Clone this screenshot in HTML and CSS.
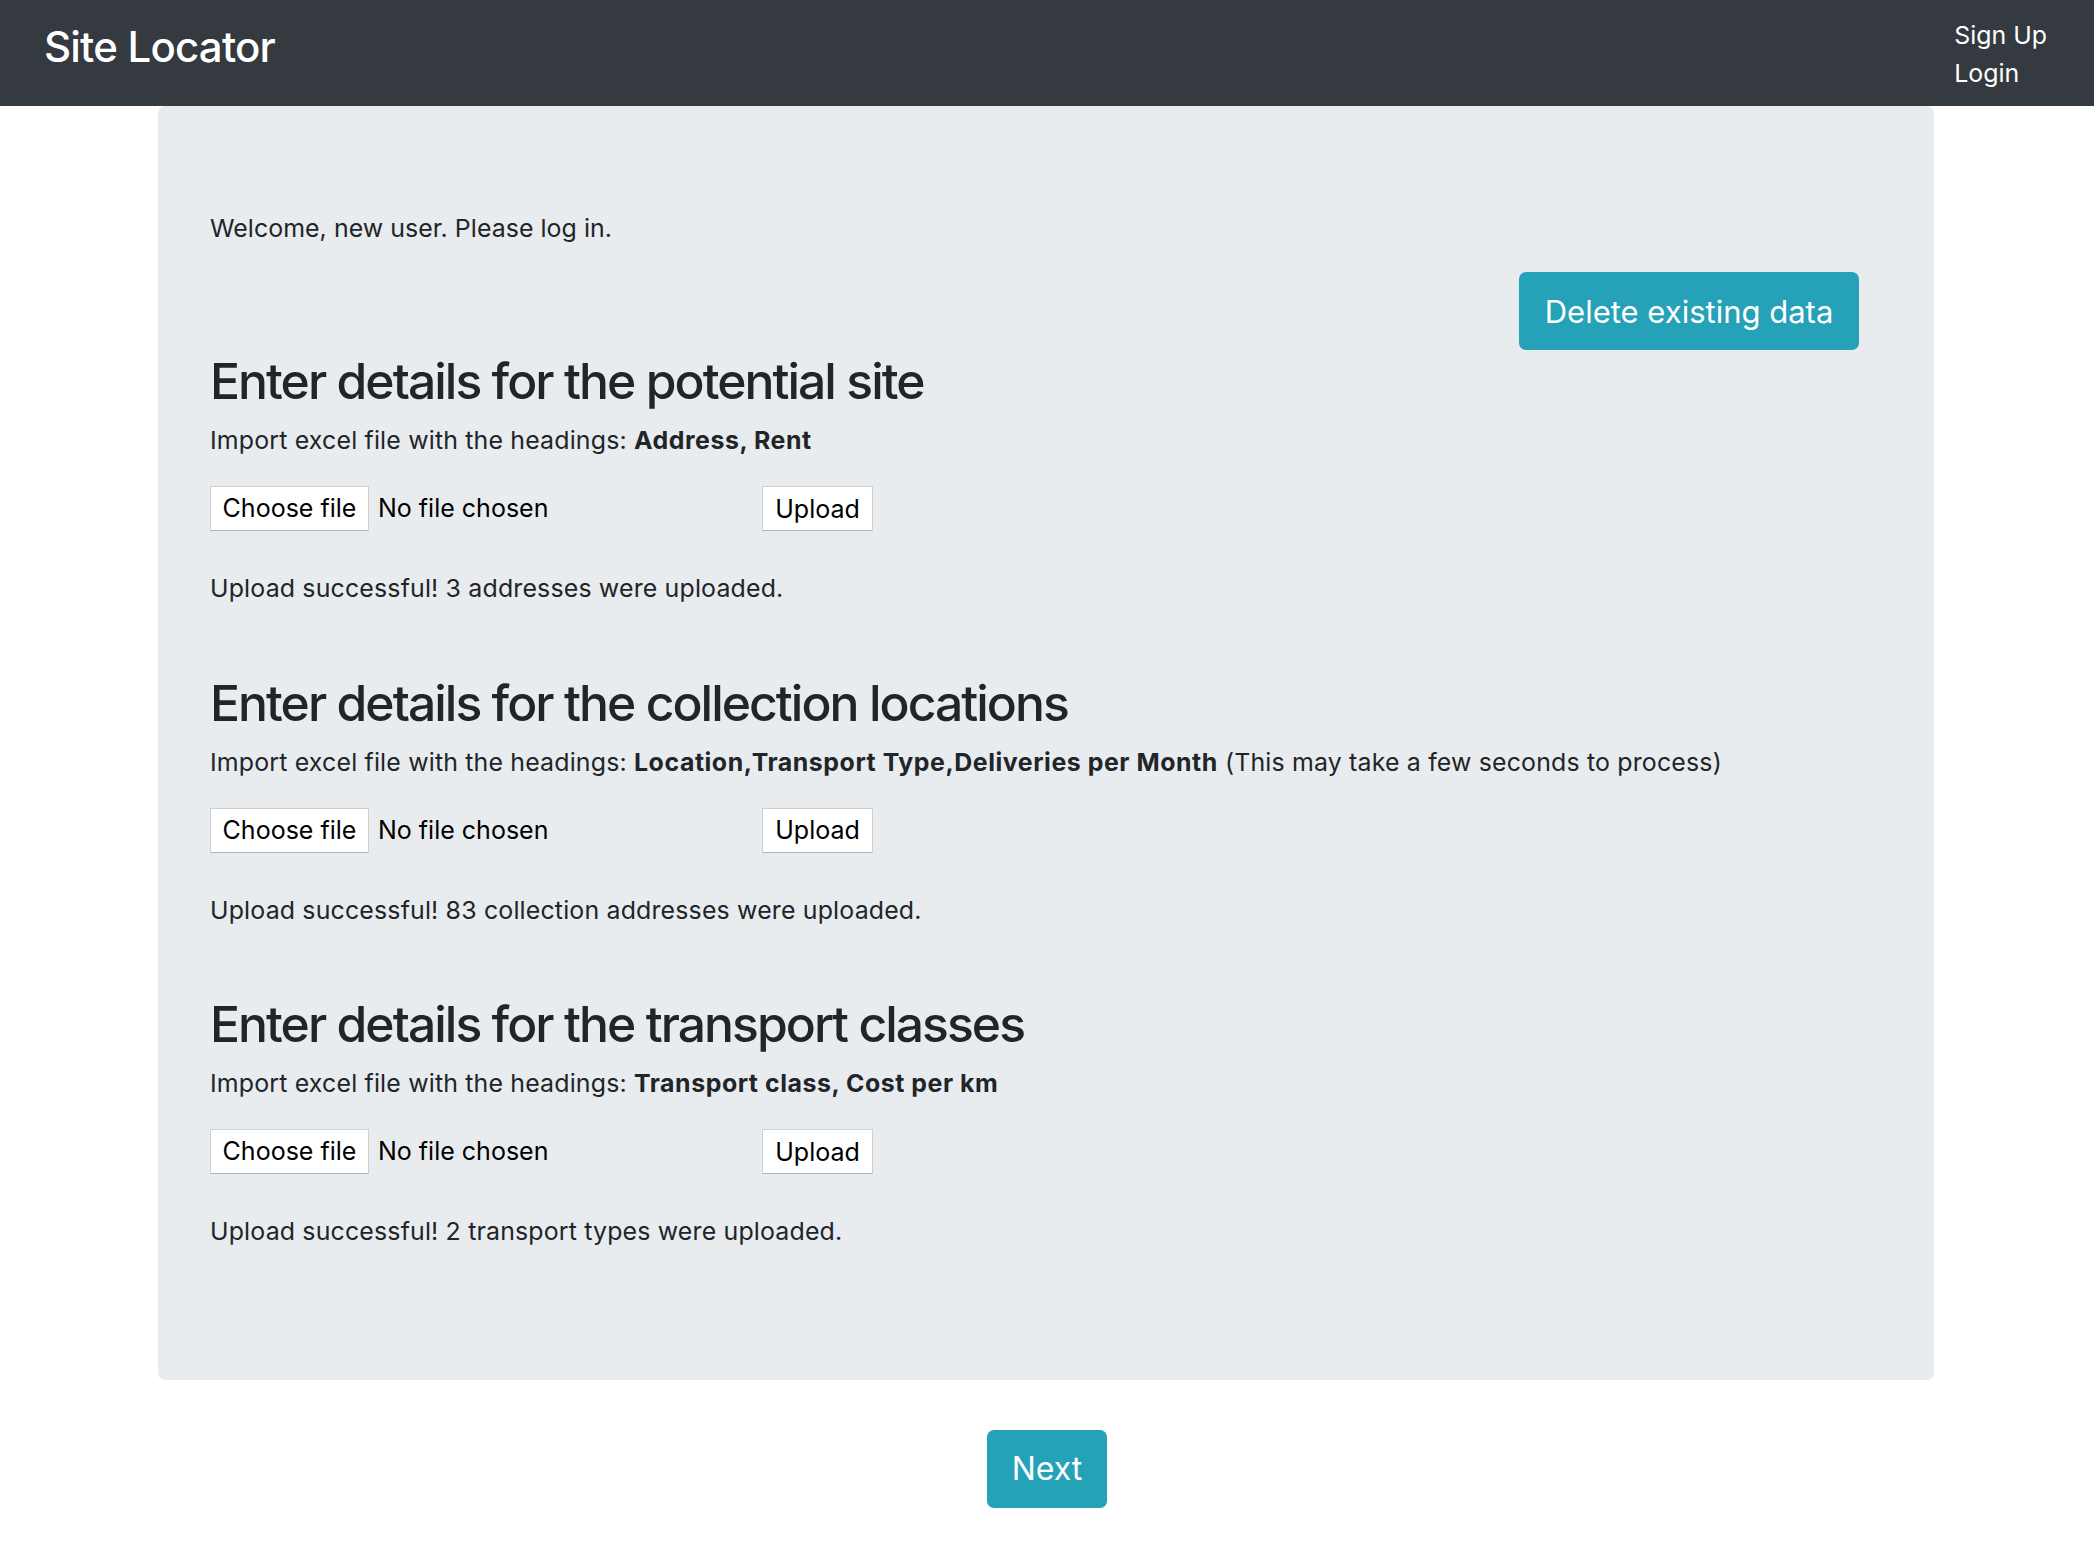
FILE: index.html
```html
<!DOCTYPE html>
<html lang="en">
<head>
<meta charset="utf-8">
<title>Site Locator</title>
<link rel="stylesheet" href="styles.css">
</head>
<body>
<header class="navbar">
  <a class="brand" href="#">Site Locator</a>
  <nav class="nav-links">
    <a href="#">Sign Up</a>
    <a href="#">Login</a>
  </nav>
</header>
<main class="jumbotron">
  <p class="welcome">Welcome, new user. Please log in.</p>
  <div class="delete-row">
    <button class="btn btn-info btn-delete">Delete existing data</button>
  </div>

  <section class="upload-section">
    <h2>Enter details for the potential site</h2>
    <p class="hint">Import excel file with the headings: <b>Address, Rent</b></p>
    <form class="upload-form">
      <div class="file-input"><span class="file-btn">Choose file</span><span class="file-name">No file chosen</span></div>
      <button type="button" class="upload-btn">Upload</button>
    </form>
    <p class="result">Upload successful! 3 addresses were uploaded.</p>
  </section>

  <section class="upload-section">
    <h2>Enter details for the collection locations</h2>
    <p class="hint">Import excel file with the headings: <b>Location,Transport Type,Deliveries per Month</b> (This may take a few seconds to process)</p>
    <form class="upload-form">
      <div class="file-input"><span class="file-btn">Choose file</span><span class="file-name">No file chosen</span></div>
      <button type="button" class="upload-btn">Upload</button>
    </form>
    <p class="result">Upload successful! 83 collection addresses were uploaded.</p>
  </section>

  <section class="upload-section">
    <h2>Enter details for the transport classes</h2>
    <p class="hint">Import excel file with the headings: <b>Transport class, Cost per km</b></p>
    <form class="upload-form">
      <div class="file-input"><span class="file-btn">Choose file</span><span class="file-name">No file chosen</span></div>
      <button type="button" class="upload-btn">Upload</button>
    </form>
    <p class="result">Upload successful! 2 transport types were uploaded.</p>
  </section>
</main>
<div class="next-row">
  <button class="btn btn-info btn-next">Next</button>
</div>
</body>
</html>
```

FILE: styles.css
```css
* { box-sizing: border-box; }

body {
  margin: 0;
  font-family: Inter, "Liberation Sans", sans-serif;
  font-size: 24.9px;
  line-height: 1.5;
  color: #212529;
  background: #fff;
}

.navbar {
  height: 106px;
  background: #343a40;
  display: flex;
  justify-content: space-between;
  align-items: center;
  padding: 0 47px 0 44px;
}

.brand {
  color: #fff;
  text-decoration: none;
  font-size: 42px;
  font-weight: 500;
  letter-spacing: -0.8px;
  line-height: 1;
  margin-top: -12px;
}

.nav-links {
  display: flex;
  flex-direction: column;
  line-height: 38px;
  margin-top: 1px;
}

.nav-links a {
  color: #fff;
  text-decoration: none;
  font-size: 24.9px;
}

.jumbotron {
  width: 1776px;
  margin: 0 0 0 158px;
  background: #e9ecef;
  border-radius: 7px;
  padding: 104px 52px 129px;
}

.jumbotron p {
  margin: 0;
  letter-spacing: 0.17px;
}

.welcome { margin-bottom: 25px !important; letter-spacing: 0.05px !important; }

.delete-row {
  display: flex;
  justify-content: flex-end;
  padding-right: 23px;
  margin-top: 4px;
}

.btn {
  border: none;
  border-radius: 7px;
  font-family: Inter, "Liberation Sans", sans-serif;
  color: #fff;
  cursor: pointer;
}

.btn-info { background: #25a2b8; }

.btn-delete {
  width: 340px;
  height: 78px;
  font-size: 31px;
  padding: 0;
}

.upload-section h2 {
  margin: 0 0 10px;
  font-size: 49.8px;
  font-weight: 500;
  line-height: 1.2;
  letter-spacing: -1.95px;
}

.upload-section:first-of-type h2 { margin-top: 2px; }

.upload-section + .upload-section { margin-top: 66px; }

.hint b {
  font-weight: 700;
  letter-spacing: 0.55px;
}

.upload-form {
  display: flex;
  align-items: center;
  margin-top: 27px;
  margin-bottom: 39px;
}

.file-input {
  width: 552px;
  display: flex;
  align-items: center;
}

.file-btn, .upload-btn {
  display: inline-flex;
  align-items: center;
  justify-content: center;
  height: 45px;
  background: #fff;
  border: 1.5px solid #cfcfcf;
  border-bottom-color: #b3b3b3;
  border-radius: 1px;
  font-family: Inter, "Liberation Sans", sans-serif;
  font-size: 25px;
  color: #000;
  padding: 0;
}

.file-btn { width: 159px; }

.file-name {
  margin-left: 9px;
  font-size: 25px;
  color: #000;
}

.upload-btn { width: 111px; }

.next-row {
  display: flex;
  justify-content: center;
  padding: 50px 0 48px;
}

.btn-next {
  width: 120px;
  height: 78px;
  font-size: 32px;
  padding: 0;
}
```
